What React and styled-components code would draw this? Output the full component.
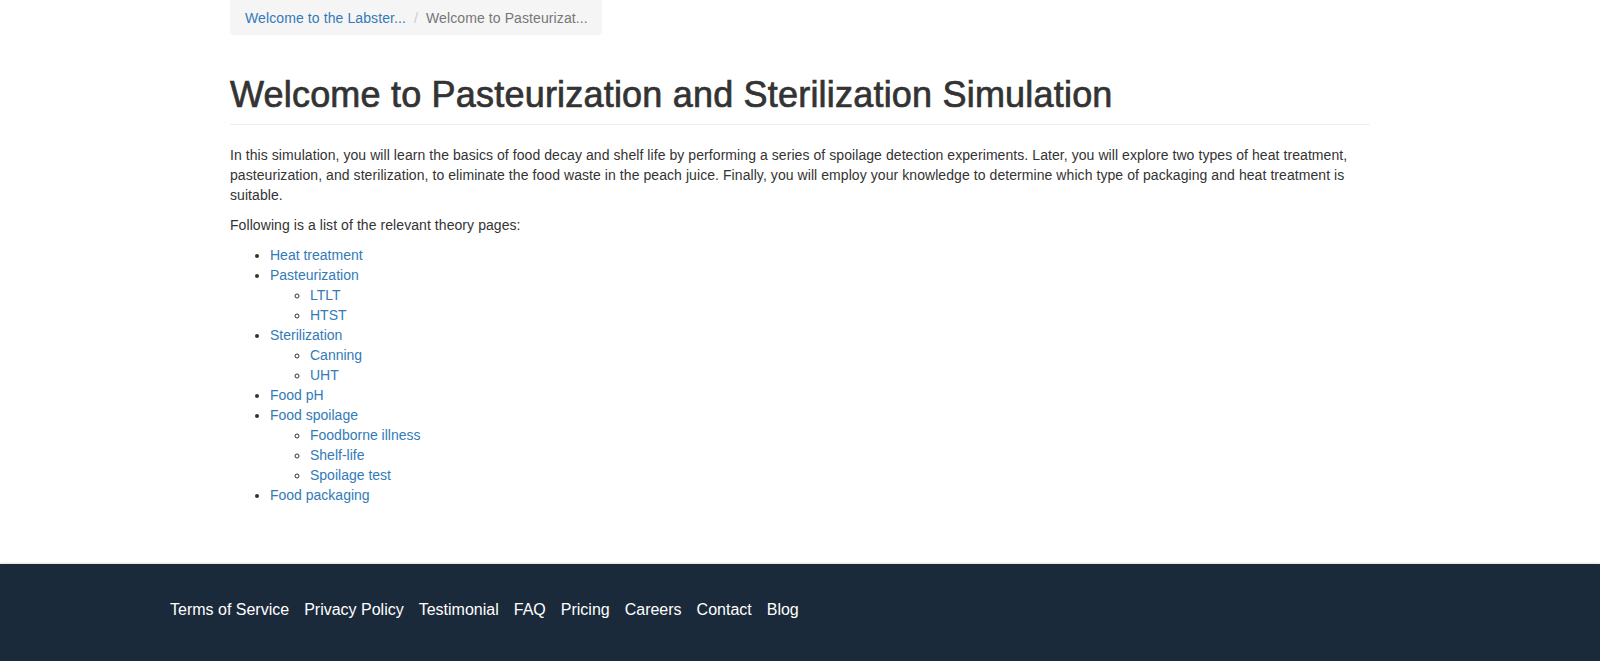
import styled, { createGlobalStyle } from "styled-components";

const GlobalStyle = createGlobalStyle`
  html, body {
    margin: 0;
    padding: 0;
    background: #fff;
  }
  body {
    font-family: "Liberation Sans", Arial, sans-serif;
    font-size: 14px;
    line-height: 20px;
    color: #333;
  }
  * { box-sizing: border-box; }
`;

const Container = styled.div`
  width: 1170px;
  margin: 0 auto;
  padding: 0 15px 49px;
`;

const Breadcrumb = styled.ol`
  display: inline-flex;
  align-items: center;
  list-style: none;
  margin: 0 0 20px;
  padding: 8px 14px 7px 15px;
  background: #f5f5f5;
  border-radius: 0 0 4px 4px;
  line-height: 20px;
  letter-spacing: 0.1px;
`;

const Crumb = styled.li`
  white-space: nowrap;
  color: ${(p) => (p.$active ? "#777" : "#337ab7")};
`;

const Divider = styled.li`
  padding: 0 8px 0 8px;
  color: #ccc;
`;

const PageHeader = styled.div`
  margin: 20px 0 20px;
  padding-bottom: 9px;
  border-bottom: 1px solid #eee;
`;

const Title = styled.h1`
  margin: 0;
  font-size: 36px;
  font-weight: 400;
  line-height: 39.6px;
  letter-spacing: 0.2px;
  color: #333;
  -webkit-text-stroke: 0.7px #333;
`;

const Para = styled.p`
  margin: 0 0 10px;
  letter-spacing: 0.07px;
`;

const List = styled.ul`
  margin: 0 0 ${(p) => (p.$nested ? "0" : "10px")};
  padding-left: 40px;
  list-style-type: ${(p) => (p.$nested ? "circle" : "disc")};
`;

const Link = styled.a`
  color: #337ab7;
  text-decoration: none;
`;

const Footer = styled.footer`
  background: #1b2a3b;
  box-shadow: 0 -1px 2px rgba(0, 0, 0, 0.12);
  padding: 35px 0 40px 170px;
  min-height: 100px;
`;

const FooterNav = styled.nav`
  display: flex;
  gap: 15px;
`;

const FooterLink = styled.a`
  color: #fff;
  font-size: 16px;
  line-height: 22px;
  text-decoration: none;
`;

const topics = [
  { name: "Heat treatment" },
  { name: "Pasteurization", sub: ["LTLT", "HTST"] },
  { name: "Sterilization", sub: ["Canning", "UHT"] },
  { name: "Food pH" },
  { name: "Food spoilage", sub: ["Foodborne illness", "Shelf-life", "Spoilage test"] },
  { name: "Food packaging" },
];

const footerLinks = ["Terms of Service", "Privacy Policy", "Testimonial", "FAQ", "Pricing", "Careers", "Contact", "Blog"];

export default function App() {
  return (
    <>
      <GlobalStyle />
      <Container>
        <Breadcrumb>
          <Crumb><Link href="#">Welcome to the Labster...</Link></Crumb>
          <Divider>/</Divider>
          <Crumb $active>Welcome to Pasteurizat...</Crumb>
        </Breadcrumb>
        <PageHeader>
          <Title>Welcome to Pasteurization and Sterilization Simulation</Title>
        </PageHeader>
        <Para>
          In this simulation, you will learn the basics of food decay and shelf life by performing a series of spoilage detection experiments. Later, you will explore two types of heat treatment, pasteurization, and sterilization, to eliminate the food waste in the peach juice. Finally, you will employ your knowledge to determine which type of packaging and heat treatment is suitable.
        </Para>
        <Para>Following is a list of the relevant theory pages:</Para>
        <List>
          {topics.map((t) => (
            <li key={t.name}>
              <Link href="#">{t.name}</Link>
              {t.sub && (
                <List $nested>
                  {t.sub.map((s) => (
                    <li key={s}><Link href="#">{s}</Link></li>
                  ))}
                </List>
              )}
            </li>
          ))}
        </List>
      </Container>
      <Footer>
        <FooterNav>
          {footerLinks.map((l) => (
            <FooterLink key={l} href="#">{l}</FooterLink>
          ))}
        </FooterNav>
      </Footer>
    </>
  );
}
